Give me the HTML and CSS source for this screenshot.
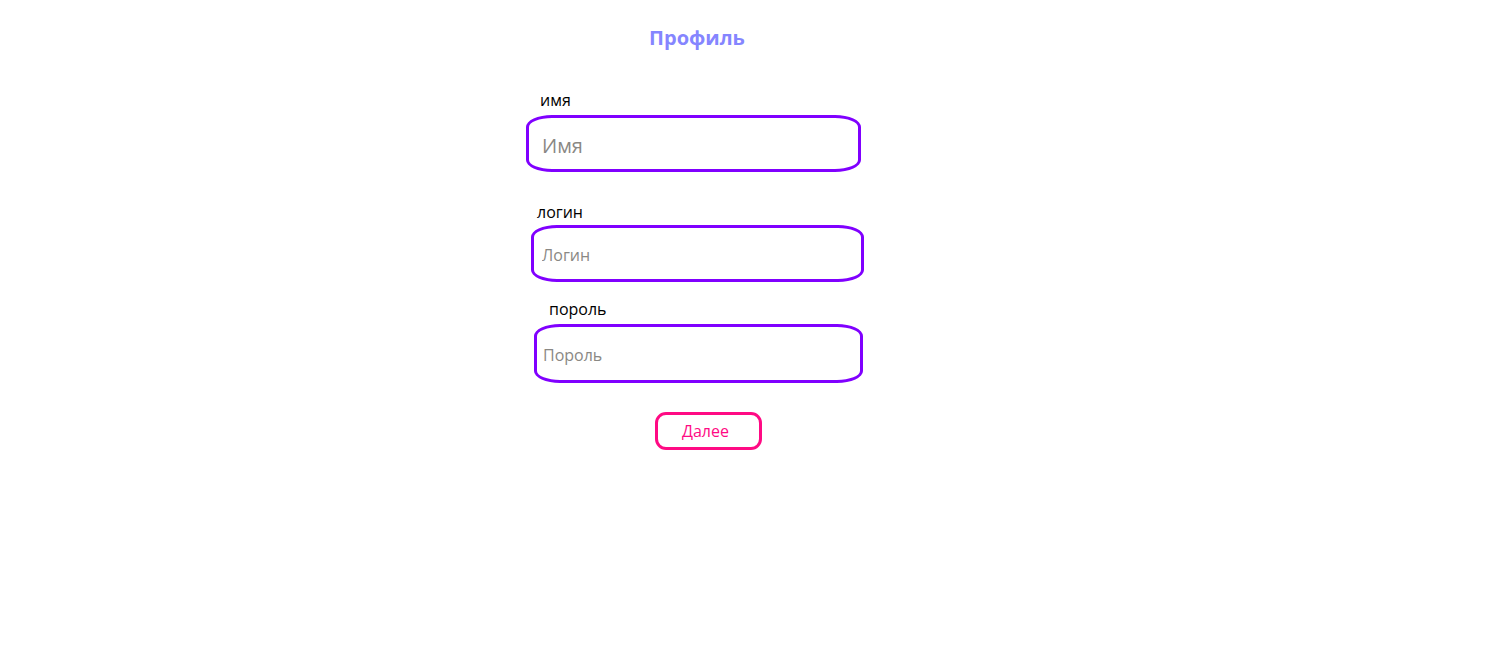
FILE: index.html
```html
<!DOCTYPE html>
<html lang="ru">
<head>
<meta charset="utf-8">
<title>Профиль</title>
<link rel="stylesheet" href="styles.css">
</head>
<body>
<main class="form">
  <h1 class="title">Профиль</h1>
  <label class="label label-name" for="name">имя</label>
  <input class="field field-name" id="name" type="text" placeholder="Имя">
  <label class="label label-login" for="login">логин</label>
  <input class="field field-login" id="login" type="text" placeholder="Логин">
  <label class="label label-pass" for="pass">пороль</label>
  <input class="field field-pass" id="pass" type="password" placeholder="Пороль">
  <button class="next" type="button">Далее</button>
</main>
</body>
</html>
```
FILE: styles.css
```css
html, body {
  margin: 0;
  padding: 0;
  background: #ffffff;
}
body {
  font-family: "Open Sans", "Noto Sans", "Liberation Sans", sans-serif;
}
.form {
  width: 340px;
  margin-left: 525px;
  padding-top: 26px;
  display: flex;
  flex-direction: column;
  align-items: flex-start;
}
.title {
  align-self: stretch;
  margin: 0;
  padding-left: 4px;
  text-align: center;
  font-size: 20px;
  line-height: 24px;
  font-weight: 700;
  color: #8585ff;
}
.label {
  display: block;
  font-size: 16px;
  line-height: 20px;
  color: #000;
}
.label-name { margin: 40px 0 5px 15px; }
.label-login { margin: 30px 0 3px 12px; }
.label-pass { margin: 17px 0 5px 24px; }
.field {
  box-sizing: border-box;
  height: 57px;
  border: 3px solid #8000ff;
  border-radius: 26px / 12px;
  background: #fff;
  outline: none;
  font-family: inherit;
  color: #333;
}
.field::placeholder { color: #8a8884; }
.field-name {
  width: 335px;
  margin-left: 1px;
  padding: 4px 0 0 13px;
  font-size: 20px;
}
.field-login {
  width: 333px;
  margin-left: 6px;
  padding: 2px 0 0 8px;
  font-size: 16px;
}
.field-pass {
  width: 329px;
  height: 59px;
  margin-left: 9px;
  padding: 3px 0 0 6px;
  font-size: 16px;
}
.next {
  box-sizing: border-box;
  margin: 29px 0 0 130px;
  width: 107px;
  height: 38px;
  border: 3px solid #ff0a84;
  border-radius: 11px;
  background: #fff;
  color: #ff0a84;
  font-family: inherit;
  font-size: 16px;
  padding: 0 6px 0 0;
  cursor: pointer;
}
```
